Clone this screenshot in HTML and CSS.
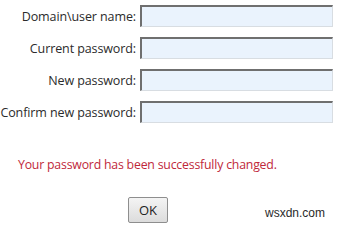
FILE: index.html
```html
<!DOCTYPE html>
<html lang="en">
    <head>
        <meta charset="UTF-8">
        <title>Change Password</title>
        <link rel="stylesheet" href="styles.css">
    </head>
    <body>
        <form class="change-form">
            <div class="fields">
                <label for="user-name">Domain\user name:</label>
                <input type="text" id="user-name" class="field-box">
                <label for="current-pass">Current password:</label>
                <input type="password" id="current-pass" class="field-box">
                <label for="new-pass">New password:</label>
                <input type="password" id="new-pass" class="field-box">
                <label for="confirm-pass">Confirm new password:</label>
                <input type="password" id="confirm-pass" class="field-box">
            </div>
            <p class="status-msg">Your password has been successfully changed.</p>
            <div class="actions">
                <input type="button" value="OK" class="ok-btn">
                <span class="watermark">wsxdn.com</span>
            </div>
        </form>
    </body>
</html>
```

FILE: styles.css
```css
body{
    margin: 0;
    padding: 0;
    background-color: #FFF;
    font-family: "Open Sans", "Noto Sans", sans-serif;
    color: #333;
}
.change-form{
    padding-top: 5px;
}
.fields{
    display: grid;
    grid-template-columns: 136px 193px;
    column-gap: 4px;
    row-gap: 10px;
    align-items: center;
}
label{
    text-align: right;
    font-size: 12.5px;
    letter-spacing: -0.1px;
    color: #2b2b2b;
}
.field-box{
    box-sizing: border-box;
    height: 22px;
    margin: 0;
    border-style: solid;
    border-width: 2px 1px 1px 2px;
    border-color: #6f6f6f #d8dde2 #d8dde2 #6f6f6f;
    background-color: #EAF3FD;
}
.status-msg{
    margin: 33px 0 0 18px;
    font-size: 12.3px;
    color: #C0283A;
    letter-spacing: -0.2px;
}
.actions{
    display: flex;
    align-items: flex-end;
    margin-top: 24px;
}
.ok-btn{
    box-sizing: border-box;
    width: 40px;
    height: 26px;
    margin-left: 128px;
    font-family: "Open Sans", "Noto Sans", sans-serif;
    font-size: 13px;
    color: #222;
    border: 1px solid #8e8e8e;
    border-radius: 2px;
    background: linear-gradient(#F4F4F4, #DCDCDC);
}
.watermark{
    margin-left: 97px;
    margin-bottom: 3px;
    font-family: "Liberation Sans", sans-serif;
    font-size: 12px;
    color: #2a2a2a;
}
```
